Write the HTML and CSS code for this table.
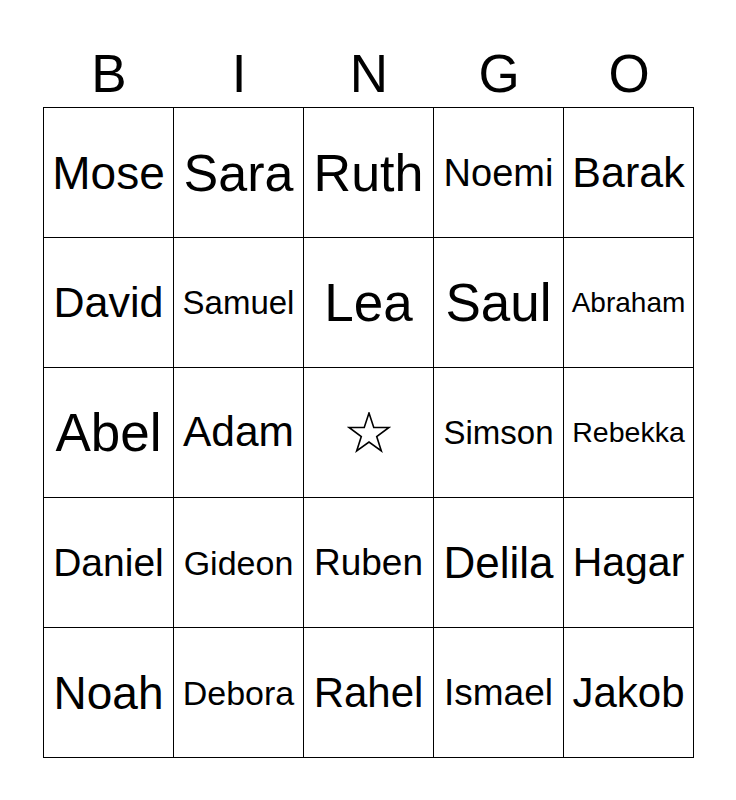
FILE: index.html
```html
<!DOCTYPE html>
<html>
<head>
<meta charset="utf-8">
<link rel="stylesheet" href="styles.css">
</head>
<body>
<div class="card">
  <div class="head">
    <div>B</div><div>I</div><div>N</div><div>G</div><div>O</div>
  </div>
  <div class="grid">
    <div class="cell" style="font-size:46px">Mose</div>
    <div class="cell" style="font-size:52px">Sara</div>
    <div class="cell" style="font-size:52px">Ruth</div>
    <div class="cell" style="font-size:38px">Noemi</div>
    <div class="cell" style="font-size:43px">Barak</div>

    <div class="cell" style="font-size:43px">David</div>
    <div class="cell" style="font-size:33px">Samuel</div>
    <div class="cell" style="font-size:53px">Lea</div>
    <div class="cell" style="font-size:53px">Saul</div>
    <div class="cell" style="font-size:28px">Abraham</div>

    <div class="cell" style="font-size:53px">Abel</div>
    <div class="cell" style="font-size:42.5px">Adam</div>
    <div class="cell"><svg class="star" width="44" height="44" viewBox="0 0 44 44"><polygon points="22,1 26.76,15.45 41.97,15.51 29.7,24.5 34.34,38.99 22,30.1 9.66,38.99 14.3,24.5 2.03,15.51 17.24,15.45" fill="none" stroke="#000" stroke-width="1.6" stroke-linejoin="miter"/></svg></div>
    <div class="cell" style="font-size:33px">Simson</div>
    <div class="cell" style="font-size:28.5px">Rebekka</div>

    <div class="cell" style="font-size:39px">Daniel</div>
    <div class="cell" style="font-size:34px">Gideon</div>
    <div class="cell" style="font-size:37px">Ruben</div>
    <div class="cell" style="font-size:44px">Delila</div>
    <div class="cell" style="font-size:41px">Hagar</div>

    <div class="cell" style="font-size:46px">Noah</div>
    <div class="cell" style="font-size:34px">Debora</div>
    <div class="cell" style="font-size:42px">Rahel</div>
    <div class="cell" style="font-size:37px">Ismael</div>
    <div class="cell" style="font-size:42px">Jakob</div>
  </div>
</div>
</body>
</html>
```
FILE: styles.css
```css
html, body {
  margin: 0;
  padding: 0;
  background: #ffffff;
}
body {
  font-family: "Liberation Sans", Arial, sans-serif;
  color: #000;
}
.card {
  width: 651px;
  margin: 0 0 0 43px;
  padding-top: 40px;
}
.head {
  display: grid;
  grid-template-columns: repeat(5, 130px);
  height: 67px;
  align-items: center;
  padding-left: 1px;
}
.head div {
  text-align: center;
  font-size: 53px;
  line-height: 1;
}
.grid {
  display: grid;
  grid-template-columns: repeat(5, 130px);
  grid-template-rows: repeat(5, 130px);
  border-top: 1px solid #000;
  border-left: 1px solid #000;
  width: 650px;
}
.cell {
  border-right: 1px solid #000;
  border-bottom: 1px solid #000;
  display: flex;
  align-items: center;
  justify-content: center;
  line-height: 1;
  white-space: nowrap;
  overflow: hidden;
}
.star {
  display: block;
  margin-top: 3px;
}
```
